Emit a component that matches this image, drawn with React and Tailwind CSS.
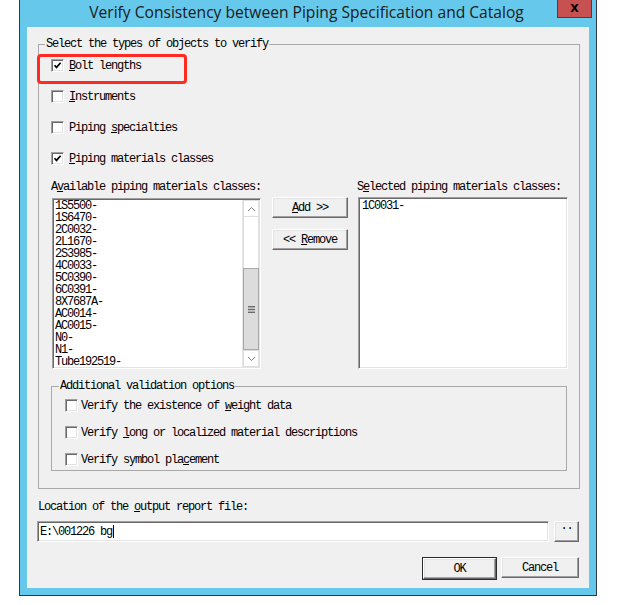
import React from "react";

const mono =
  "font-['Liberation_Mono','DejaVu_Sans_Mono',monospace] text-[12px] leading-[12px] tracking-[-1.2px] text-black";

const sunken =
  "bg-white border border-t-[#a0a0a0] border-l-[#a0a0a0] border-r-white border-b-white shadow-[inset_1px_1px_0_#696969,inset_-1px_-1px_0_#e3e3e3]";

const raised =
  "bg-[#f0f0f0] border border-t-white border-l-white border-r-[#696969] border-b-[#696969] shadow-[inset_-1px_-1px_0_#a0a0a0,inset_1px_1px_0_#e3e3e3]";

function CheckBox({ checked }) {
  return (
    <span className="w-[13px] h-[13px] shrink-0 flex items-center justify-center bg-white border border-t-[#a0a0a0] border-l-[#a0a0a0] border-r-white border-b-white shadow-[inset_1px_1px_0_#696969,inset_-1px_-1px_0_#e3e3e3]">
      {checked && (
        <svg width="9" height="9" viewBox="0 0 9 9">
          <polyline
            points="1.5,4.2 3.5,6.4 7.6,1.8"
            fill="none"
            stroke="#000"
            strokeWidth="1.7"
          />
        </svg>
      )}
    </span>
  );
}

function Option({ checked, children, gap = "gap-[5px]" }) {
  return (
    <div className={`flex items-center ${gap} h-[13px]`}>
      <CheckBox checked={checked} />
      <span className={`${mono} whitespace-pre`}>{children}</span>
    </div>
  );
}

function Button({ children, className = "" }) {
  return (
    <div
      className={`${raised} ${mono} h-[21px] flex items-center justify-center whitespace-pre ${className}`}
    >
      {children}
    </div>
  );
}

function Chevron({ up }) {
  return (
    <svg width="9" height="6" viewBox="0 0 9 6">
      <polyline
        points={up ? "1,5 4.5,1.5 8,5" : "1,1 4.5,4.5 8,1"}
        fill="none"
        stroke="#7a7a7a"
        strokeWidth="1"
      />
    </svg>
  );
}

function ScrollBar() {
  return (
    <div className="w-[17px] h-full flex flex-col bg-[#f4f4f4] border-l border-[#e6e6e6]">
      <div className="h-[17px] flex items-center justify-center bg-white border border-[#dedede]">
        <Chevron up />
      </div>
      <div className="h-[51px] bg-white border-x border-[#dedede]" />
      <div className="flex-1 bg-[#dcdcdc] border border-[#a8a8a8] flex items-center justify-center">
        <svg width="7" height="7" viewBox="0 0 7 7">
          <rect x="0" y="0" width="7" height="1.4" fill="#6a6a6a" />
          <rect x="0" y="2.8" width="7" height="1.4" fill="#6a6a6a" />
          <rect x="0" y="5.6" width="7" height="1.4" fill="#6a6a6a" />
        </svg>
      </div>
      <div className="h-[17px] flex items-center justify-center bg-white border border-[#dedede]">
        <Chevron />
      </div>
    </div>
  );
}

const available = [
  "1S5500-",
  "1S6470-",
  "2C0032-",
  "2L1670-",
  "2S3985-",
  "4C0033-",
  "5C0390-",
  "6C0391-",
  "8X7687A-",
  "AC0014-",
  "AC0015-",
  "N0-",
  "N1-",
  "Tube192519-",
];

export default function App() {
  return (
    <div className="w-[619px] h-[605px] bg-white pl-[19px]">
      <div className="w-[578px] h-[596px] bg-[#66c9eb] border-x border-b border-[#2f3b40] flex flex-col">
        {/* title bar */}
        <div className="h-[27px] flex items-start">
          <div className="flex-1 h-[25px] flex items-center justify-center pl-[36px] font-['Open_Sans',sans-serif] text-[15.6px] text-[#1a1a1a]">
            Verify Consistency between Piping Specification and Catalog
          </div>
          <div className="w-[35px] h-[18px] mr-[4px] bg-[#c75050] border border-[#6e2f2f] border-t-0 flex items-center justify-center">
            <span className="font-['DejaVu_Sans',sans-serif] font-bold text-[11px] leading-none text-black">
              X
            </span>
          </div>
        </div>

        {/* client area */}
        <div className="mx-[7px] h-[561px] bg-[#f0f0f0] flex flex-col">
          <fieldset className="relative mt-[11px] ml-[11px] w-[542px] h-[451px] border border-[#a9a9a9] pb-[17px]">
            <legend className={`${mono} ml-[6px] px-[1px] whitespace-pre`}>
              Select the types of objects to verify
            </legend>

            <div className="flex flex-col gap-[18px] pt-[9px] pl-[12px]">
              <Option checked>
                <u>B</u>olt lengths
              </Option>
              <Option>
                <u>I</u>nstruments
              </Option>
              <Option>
                Piping <u>s</u>pecialties
              </Option>
              <Option checked>
                <u>P</u>iping materials classes
              </Option>
            </div>

            {/* highlight around the first option */}
            <div className="absolute left-[-2px] top-[4px] w-[150px] h-[30px] rounded-[4px] border-[3px] border-[#ff2b22]" />

            <div className="flex pl-[12px] mt-[16px]">
              <div className="w-[210px] flex flex-col">
                <div className={`${mono} whitespace-pre h-[12px]`}>
                  A<u>v</u>ailable piping materials classes:
                </div>
                <div className={`${sunken} ml-[1px] mt-[5px] w-[209px] h-[171px] flex p-[1px]`}>
                  <div className="flex-1 flex flex-col pl-[1px] pt-0">
                    {available.map((s) => (
                      <div key={s} className={`${mono} h-[12px] whitespace-pre`}>
                        {s}
                      </div>
                    ))}
                  </div>
                  <ScrollBar />
                </div>
              </div>

              <div className="ml-[11px] pt-[16px] flex flex-col gap-[11px]">
                <Button className="w-[76px]">
                  <u>A</u>dd &gt;&gt;
                </Button>
                <Button className="w-[76px]">
                  &lt;&lt; <u>R</u>emove
                </Button>
              </div>

              <div className="ml-[9px] flex flex-col">
                <div className={`${mono} whitespace-pre h-[12px]`}>
                  S<u>e</u>lected piping materials classes:
                </div>
                <div className={`${sunken} ml-[1px] mt-[4px] w-[210px] h-[172px] p-[2px] pl-[3px]`}>
                  <div className={`${mono} h-[12px]`}>1C0031-</div>
                </div>
              </div>
            </div>

            <fieldset className="mt-[11px] ml-[12px] w-[516px] h-[91px] border border-[#a9a9a9]">
              <legend className={`${mono} ml-[7px] px-[1px] whitespace-pre`}>
                Additional validation options
              </legend>
              <div className="flex flex-col gap-[14px] pt-[7px] pl-[13px]">
                <Option gap="gap-[3px]">
                  Verify the existence of <u>w</u>eight data
                </Option>
                <Option gap="gap-[3px]">
                  Verify <u>l</u>ong or localized material descriptions
                </Option>
                <Option gap="gap-[3px]">
                  Verify symbol pla<u>c</u>ement
                </Option>
              </div>
            </fieldset>
          </fieldset>

          <div className={`${mono} whitespace-pre ml-[11px] mt-[12px] h-[12px]`}>
            Location of the <u>o</u>utput report file:
          </div>

          <div className="flex ml-[10px] mt-[8px] gap-[5px]">
            <div className={`${sunken} w-[512px] h-[21px] flex items-center pl-[2px]`}>
              <span className={`${mono} whitespace-pre`}>E:\001226 bg</span>
              <span className="w-[1px] h-[13px] bg-black ml-[1px]" />
            </div>
            <Button className="w-[25px]">
              <span className="relative -top-[3px]">··</span>
            </Button>
          </div>

          <div className="flex justify-end gap-[4px] mt-[15px] mr-[10px]">
            <div className="border border-[#2a2a2a]">
              <Button className="w-[73px] h-[19px]">OK</Button>
            </div>
            <Button className="w-[78px]">Cancel</Button>
          </div>
        </div>
      </div>
    </div>
  );
}
